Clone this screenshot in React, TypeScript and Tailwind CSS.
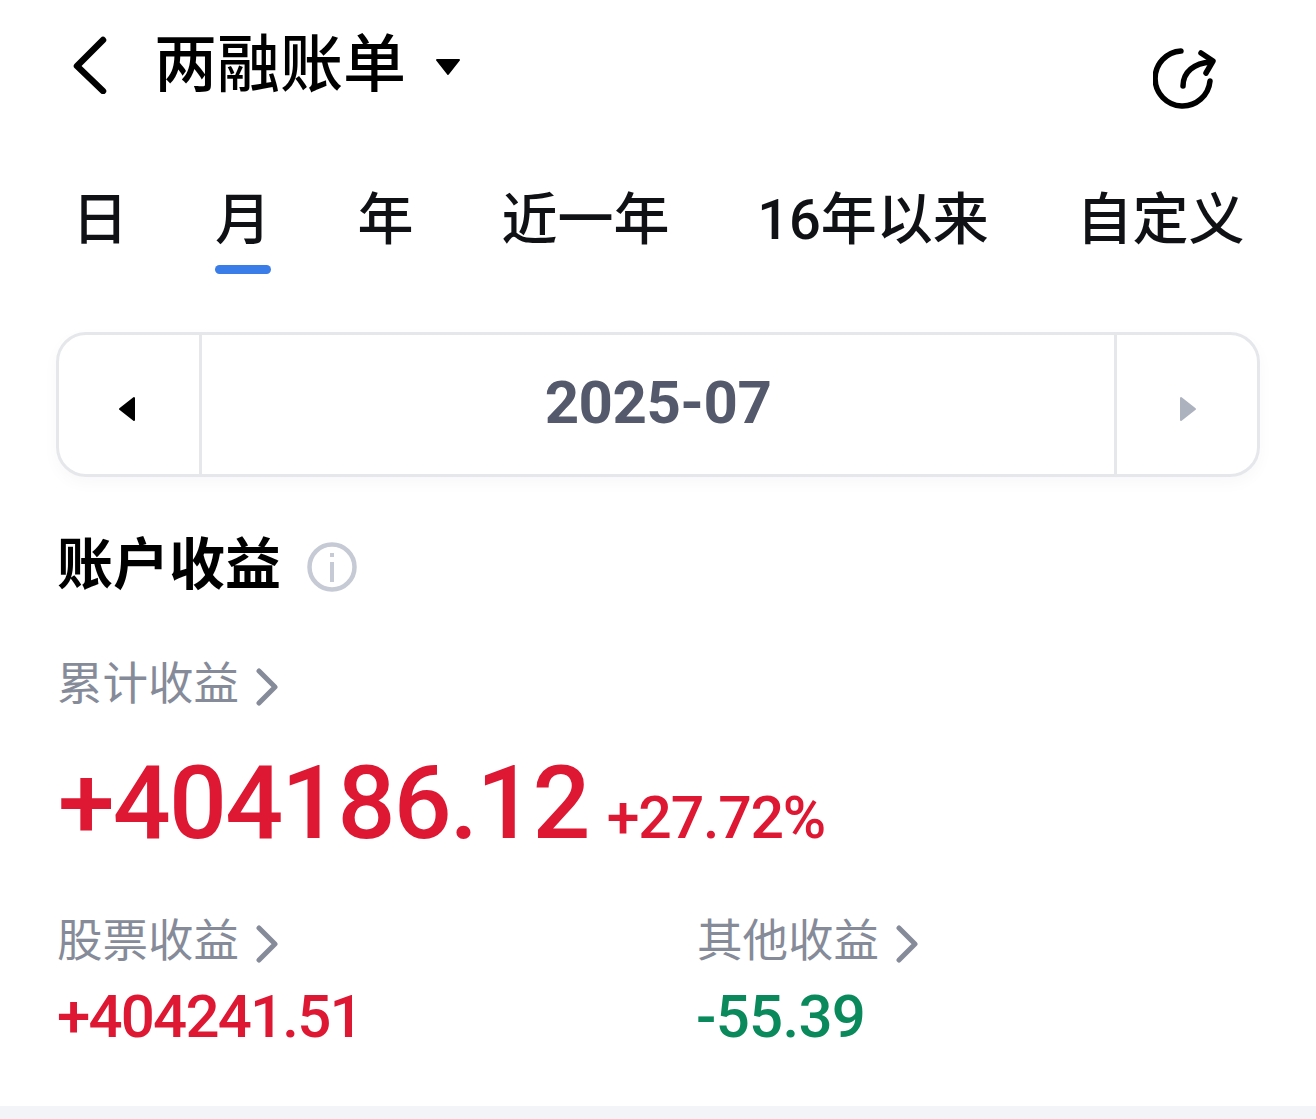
import React from 'react';

const cjk = "font-['Roboto','Noto_Sans_CJK_SC',sans-serif]";

const tabs = [
  { label: '日', active: false, width: 'w-[44px]' },
  { label: '月', active: true, width: 'w-[56px]' },
  { label: '年', active: false, width: 'w-[55px]' },
  { label: '近一年', active: false, width: 'w-[165px]' },
  { label: '16年以来', active: false, width: 'w-[230px]' },
  { label: '自定义', active: false, width: 'w-[165px]' },
];

const LabelLink = ({ text }: { text: string }) => (
  <div className="flex items-center gap-[18px] h-[50px] ml-[-1px]">
    <span className="text-[45.5px] leading-[50px] text-[#868b99]">{text}</span>
    <svg width="24" height="38" viewBox="0 0 24 38" fill="none" className="mt-1 ml-[-2px]">
      <path d="M4 3 L20 19 L4 35" stroke="#868b99" strokeWidth="5" strokeLinecap="round" strokeLinejoin="round" />
    </svg>
  </div>
);

export default function App() {
  return (
    <div className={`${cjk} w-[1316px] h-[1119px] bg-white flex flex-col overflow-hidden`}>
      {/* Header */}
      <div className="flex items-start justify-between h-[170px] pl-[72px] pr-[100px]">
        <div className="flex items-center mt-[33px]">
          <svg width="36" height="58" viewBox="0 0 36 58" fill="none">
            <path d="M31 4 L5 30 L31 55" stroke="#000" strokeWidth="6.5" strokeLinecap="round" strokeLinejoin="round" />
          </svg>
          <span className="ml-[46px] text-[63px] leading-[64px] font-medium text-black">两融账单</span>
          <svg width="26" height="18" viewBox="0 0 26 18" className="ml-[29px] mt-[3px]">
            <path d="M2 2 H24 L13 16 Z" fill="#000" stroke="#000" strokeWidth="2" strokeLinejoin="round" />
          </svg>
        </div>
        <svg width="66" height="66" viewBox="0 0 66 66" fill="none" className="mt-[46px] mr-[-3px]">
          <path d="M28 5 A27.5 27.5 0 1 0 57 35" stroke="#000" strokeWidth="5.5" strokeLinecap="round" />
          <path d="M30 40 C30 26 41 17 58 16" stroke="#000" strokeWidth="5.5" strokeLinecap="round" />
          <path d="M48 7 L60 15 L53 27" stroke="#000" strokeWidth="5.5" strokeLinecap="round" strokeLinejoin="round" />
        </svg>
      </div>

      {/* Tabs */}
      <div className="flex justify-between pl-[78px] pr-[73px] h-[162px]">
        {tabs.map((tab, i) => (
          <div key={tab.label} className={`flex flex-col items-center ${tab.width} ${i === 1 ? 'translate-x-[3px]' : ''}`}>
            <span className="text-[56px] leading-[70px] mt-[15px] whitespace-nowrap font-medium text-[#0f1115]">{tab.label}</span>
            {tab.active && <div className="mt-[10px] h-[9px] w-[56px] rounded-full bg-[#3b7de8]" />}
          </div>
        ))}
      </div>

      {/* Month picker */}
      <div className="mx-[56px] h-[145px] flex rounded-[30px] border-[3px] border-[#e6e7eb] shadow-[0_6px_16px_rgba(30,40,80,0.03)]">
        <div className="w-[143px] flex items-center justify-center border-r-[3px] border-[#e6e7eb]">
          <svg width="18" height="26" viewBox="0 0 18 26" className="mt-2 mr-[4px]">
            <path d="M16 2 V24 L2 13 Z" fill="#000" stroke="#000" strokeWidth="2" strokeLinejoin="round" />
          </svg>
        </div>
        <div className="flex-1 flex items-center justify-center">
          <span className="text-[60px] font-bold tracking-[-0.5px] text-[#545a6b] mb-[3px]">2025-07</span>
        </div>
        <div className="w-[143px] flex items-center justify-center border-l-[3px] border-[#e6e7eb]">
          <svg width="18" height="26" viewBox="0 0 18 26" className="mt-2 ml-[2px]">
            <path d="M2 2 V24 L16 13 Z" fill="#adb2bf" stroke="#adb2bf" strokeWidth="2" strokeLinejoin="round" />
          </svg>
        </div>
      </div>

      {/* Account income */}
      <div className="flex-1 px-[58px] flex flex-col">
        <div className="flex items-center mt-[53px] h-[70px]">
          <span className="text-[56px] leading-[70px] font-bold text-black ml-[-1px]">账户收益</span>
          <svg width="50" height="50" viewBox="0 0 50 50" fill="none" className="ml-[26px] mt-1">
            <circle cx="25" cy="25" r="22.5" stroke="#c6cad4" strokeWidth="4.5" />
            <rect x="23" y="11" width="4" height="4" fill="#c6cad4" />
            <rect x="23" y="20" width="4" height="20" fill="#c6cad4" />
          </svg>
        </div>

        <div className="mt-[60px]">
          <LabelLink text="累计收益" />
        </div>
        <div className="flex items-baseline mt-[41px] h-[105px] font-medium text-[#de1733]">
          <span className="text-[102px] leading-[105px] tracking-[-1.8px]">+404186.12</span>
          <span className="ml-[18px] text-[59px] leading-[60px] tracking-[-1.2px]">+27.72%</span>
        </div>

        <div className="grid grid-cols-2 mt-[61px] w-[1280px]">
          <div>
            <LabelLink text="股票收益" />
            <div className="mt-[15px] ml-[-1px] text-[60px] leading-[70px] font-medium tracking-[-1.8px] text-[#de1733]">+404241.51</div>
          </div>
          <div>
            <LabelLink text="其他收益" />
            <div className="mt-[15px] ml-[-2px] text-[60px] leading-[70px] font-medium tracking-[-0.7px] text-[#0a8a5c]">-55.39</div>
          </div>
        </div>
      </div>

      {/* Bottom band */}
      <div className="h-[13px] bg-[#f3f4f8]" />
    </div>
  );
}
